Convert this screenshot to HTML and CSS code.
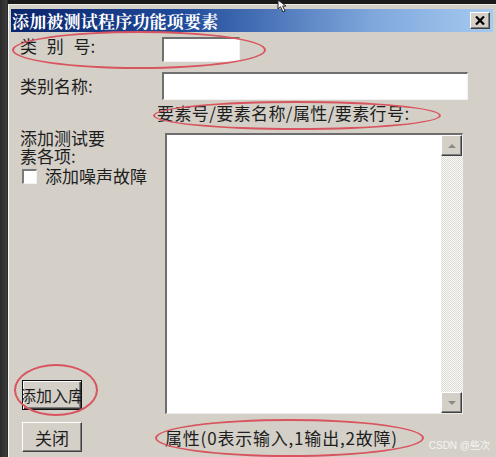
FILE: index.html
```html
<!DOCTYPE html>
<html lang="zh-CN">
<head>
    <meta charset="UTF-8">
    <meta name="viewport" content="width=device-width, initial-scale=1.0">
    <title>添加被测试程序功能项要素</title>
    <link rel="stylesheet" href="styles.css">
</head>
<body>
    <div class="screen">
        <div class="window">
            <div class="titlebar">
                <span class="title">添加被测试程序功能项要素</span>
                <span class="close-btn">
                    <svg width="10" height="9" viewBox="0 0 10 9"><path d="M1 0.5 L9 8.5 M9 0.5 L1 8.5" stroke="#000" stroke-width="2.2"/></svg>
                </span>
            </div>

            <div class="content">
                <div class="row row-id">
                    <label class="label spaced">类 别 号:</label>
                    <div class="field field-short"></div>
                </div>
                <div class="row row-name">
                    <label class="label">类别名称:</label>
                    <div class="field field-long"></div>
                </div>
                <div class="hint">要素号/要素名称/属性/要素行号:</div>

                <div class="main">
                    <div class="side">
                        <div class="side-line">添加测试要</div>
                        <div class="side-line">素各项:</div>
                        <div class="check-row">
                            <span class="checkbox"></span>
                            <span>添加噪声故障</span>
                        </div>
                        <div class="btn btn-default"><span>添加入库</span></div>
                    </div>
                    <div class="memo">
                        <div class="memo-text"></div>
                        <div class="scrollbar">
                            <div class="sb-btn"><span class="arrow-up"></span></div>
                            <div class="sb-track"></div>
                            <div class="sb-btn"><span class="arrow-down"></span></div>
                        </div>
                    </div>
                </div>

                <div class="footer-row">
                    <div class="btn"><span>关闭</span></div>
                    <div class="note">属性(0表示输入,1输出,2故障)</div>
                </div>
            </div>
        </div>

        <!-- red annotation marks drawn over the dialog -->
        <span class="mark mark-1"></span>
        <span class="mark mark-2"></span>
        <span class="mark mark-3"></span>
        <span class="mark mark-4"></span>

        <span class="watermark">CSDN @些次</span>

        <svg class="cursor" width="16" height="13" viewBox="0 0 16 13">
            <path d="M2 0 L2 9 L4.5 6.8 L7 12 L9 11 L6.6 6 L10 6 Z" fill="#fff" stroke="#222" stroke-width="1"/>
        </svg>
    </div>
</body>
</html>
```

FILE: styles.css
```css
* {
    box-sizing: border-box;
}
body {
    margin: 0;
    font-family: "Noto Sans CJK SC", "Liberation Sans", sans-serif;
    background: #1c1c1c;
}
.screen {
    position: relative;
    width: 496px;
    height: 457px;
    overflow: hidden;
    padding: 4px 0 0 8px;
    background: linear-gradient(to right, #2a2a2a, #3d3d3d 7px, #1a1a1a 8px);
}
.window {
    height: 453px;
    background: #d4d0c8;
    border-top: 1px solid #ecebe6;
    border-left: 1px solid #f6f6f6;
    padding-top: 4px;
    color: #1e1e1e;
}
.titlebar {
    height: 23px;
    margin: 0 3px 0 2px;
    display: flex;
    align-items: center;
    justify-content: space-between;
    padding: 0 3px 0 1px;
    background: linear-gradient(to right, #0a246a 0%, #1f4a9a 35%, #7fa7dc 75%, #a6caf0 100%);
}
.title {
    color: #fff;
    font-weight: bold;
    font-size: 17px;
    line-height: 23px;
    letter-spacing: 0.2px;
    font-family: "Noto Serif CJK SC", "Noto Sans CJK SC", serif;
}
.close-btn {
    width: 20px;
    height: 17px;
    display: flex;
    align-items: center;
    justify-content: center;
    background: #d4d0c8;
    border-top: 1px solid #fff;
    border-left: 1px solid #fff;
    border-right: 1px solid #404040;
    border-bottom: 1px solid #404040;
    box-shadow: inset -1px -1px 0 #808080;
}
.content {
    padding-left: 11px;
    font-size: 17px;
}
.row {
    display: flex;
    align-items: center;
}
.row-id {
    margin-top: 5px;
    align-items: flex-start;
}
.row-name {
    margin-top: 10px;
}
.label {
    width: 142px;
    line-height: 22px;
}
.spaced {
    word-spacing: 6px;
    margin-top: -2px;
}
.field {
    background: #fff;
    border-top: 2px solid #707070;
    border-left: 2px solid #707070;
    border-right: 1px solid #f2f2f2;
    border-bottom: 1px solid #f2f2f2;
}
.field-short {
    width: 78px;
    height: 25px;
}
.field-long {
    width: 306px;
    height: 28px;
}
.hint {
    margin: 3px 0 0 137px;
    line-height: 20px;
    letter-spacing: 0.4px;
}
.main {
    display: flex;
    margin-top: 6px;
    height: 285px;
}
.side {
    width: 145px;
    display: flex;
    flex-direction: column;
}
.side-line {
    height: 18px;
    line-height: 18px;
}
.check-row {
    display: flex;
    align-items: center;
    gap: 8px;
    margin: 2px 0 0 2px;
    height: 18px;
    line-height: 18px;
}
.checkbox {
    width: 15px;
    height: 15px;
    background: #fff;
    border-top: 2px solid #7a7a7a;
    border-left: 2px solid #7a7a7a;
    border-right: 1px solid #f2f2f2;
    border-bottom: 1px solid #f2f2f2;
}
.btn {
    width: 60px;
    height: 30px;
    margin-left: 2px;
    display: flex;
    align-items: center;
    justify-content: center;
    overflow: hidden;
    white-space: nowrap;
    background: #d4d0c8;
    border-top: 1px solid #fff;
    border-left: 1px solid #fff;
    border-right: 1px solid #404040;
    border-bottom: 1px solid #404040;
    box-shadow: inset -1px -1px 0 #808080;
}
.btn-default {
    margin-top: auto;
    margin-bottom: 4px;
    border: 1px solid #111;
    box-shadow: inset 1px 1px 0 #fff, inset -1px -1px 0 #404040, inset -2px -2px 0 #808080;
    font-size: 16px;
}
.btn-default span {
    flex-shrink: 0;
}
.memo {
    display: flex;
    width: 298px;
    height: 281px;
    margin-top: 4px;
    background: #fff;
    border-top: 2px solid #6e6e6e;
    border-left: 2px solid #6e6e6e;
    border-bottom: 1px solid #ececec;
    border-right: 1px solid #ececec;
}
.memo-text {
    flex: 1;
}
.scrollbar {
    width: 21px;
    display: flex;
    flex-direction: column;
    background-color: #ecebe8;
    background-image: repeating-conic-gradient(#f8f8f8 0 25%, #dedbd5 0 50%);
    background-size: 2px 2px;
}
.sb-track {
    flex: 1;
}
.sb-btn {
    height: 21px;
    display: flex;
    align-items: center;
    justify-content: center;
    background: #d4d0c8;
    border-top: 1px solid #fff;
    border-left: 1px solid #fff;
    border-right: 1px solid #404040;
    border-bottom: 1px solid #404040;
    box-shadow: inset -1px -1px 0 #808080;
}
.arrow-up,
.arrow-down {
    width: 0;
    height: 0;
    border-left: 4px solid transparent;
    border-right: 4px solid transparent;
}
.arrow-up {
    border-bottom: 4px solid #8c8a86;
}
.arrow-down {
    border-top: 4px solid #8c8a86;
}
.footer-row {
    display: flex;
    align-items: center;
    margin-top: 8px;
}
.note {
    margin-left: 83px;
    letter-spacing: 0.8px;
}
.mark {
    position: absolute;
    border: 2px solid #d8545e;
    border-radius: 50%;
}
.mark-1 {
    left: 12px;
    top: 31px;
    width: 254px;
    height: 38px;
}
.mark-2 {
    left: 153px;
    top: 101px;
    width: 288px;
    height: 29px;
}
.mark-3 {
    left: 14px;
    top: 364px;
    width: 84px;
    height: 52px;
}
.mark-4 {
    left: 155px;
    top: 419px;
    width: 269px;
    height: 38px;
}
.watermark {
    position: absolute;
    right: 6px;
    top: 437px;
    font-size: 10px;
    color: #f4f4f4;
    font-family: "Liberation Sans", "Noto Sans CJK SC", sans-serif;
    white-space: nowrap;
}
.cursor {
    position: absolute;
    left: 276px;
    top: 0;
}
```
